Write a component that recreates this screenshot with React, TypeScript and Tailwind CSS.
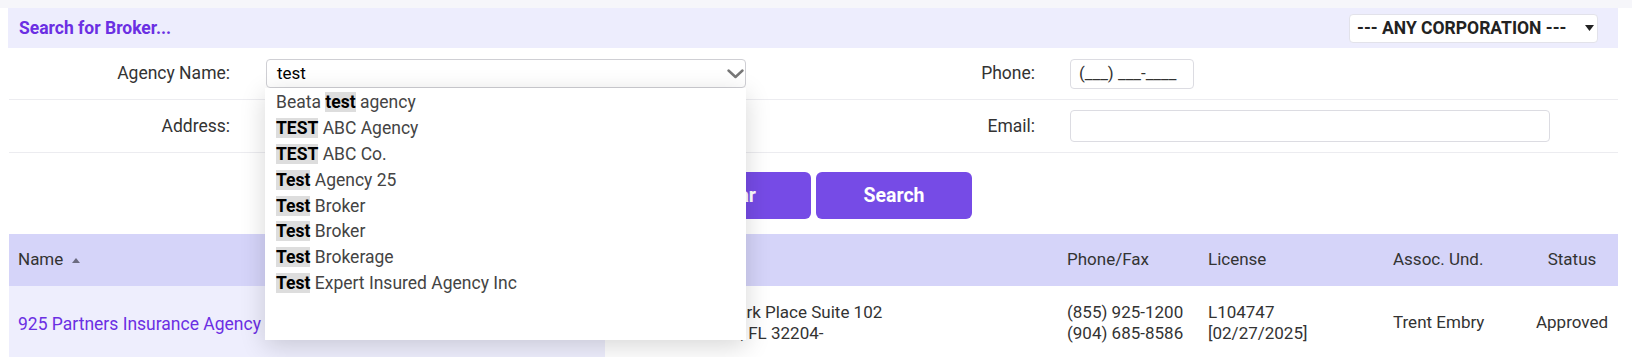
import React from 'react'

const font = { fontFamily: 'Roboto, "Noto Sans", sans-serif' }

const suggestions: { match: string; rest: string; pre?: string }[] = [
  { pre: 'Beata ', match: 'test', rest: ' agency' },
  { match: 'TEST', rest: ' ABC Agency' },
  { match: 'TEST', rest: ' ABC Co.' },
  { match: 'Test', rest: ' Agency 25' },
  { match: 'Test', rest: ' Broker' },
  { match: 'Test', rest: ' Broker' },
  { match: 'Test', rest: ' Brokerage' },
  { match: 'Test', rest: ' Expert Insured Agency Inc' },
]

function Chevron() {
  return (
    <svg width="17" height="10" viewBox="0 0 17 10" className="text-[#777]">
      <path d="M1.5 1.5 L8.5 8 L15.5 1.5" fill="none" stroke="currentColor" strokeWidth="2.4" strokeLinecap="round" strokeLinejoin="round" />
    </svg>
  )
}

export default function App() {
  return (
    <div className="min-h-[357px] bg-white text-[17px] text-[#333]" style={font}>
      <div className="h-[8px] bg-[#f6f6fa]" />
      <div className="pl-[8px] pr-[14px]">
        {/* title bar */}
        <div className="flex h-[40px] items-center justify-between bg-[#ededfd] pl-[11px] pr-[20px]">
          <span className="text-[17.5px] font-bold text-[#6b2fe3]">Search for Broker...</span>
          <div className="flex h-[29px] w-[249px] items-center justify-between rounded-[4px] border border-[#e2e2ea] bg-white pl-[7px] pr-[3px]">
            <span className="text-[17.5px] font-bold text-[#222]">--- ANY CORPORATION ---</span>
            <svg width="9" height="6" viewBox="0 0 9 6">
              <path d="M0 0 H9 L4.5 6 Z" fill="#222" />
            </svg>
          </div>
        </div>

        {/* form */}
        <div className="relative pl-[1px]">
          <div className="flex h-[52px] items-center border-b border-[#ececf0]">
            <div className="w-[221px] text-right text-[17.5px]">Agency Name:</div>
            <div className="ml-[36px] flex h-[29px] w-[480px] items-center justify-between rounded-[4px] border border-[#cfcfd4] pl-[10px] pr-[1px] text-black">
              <span>test</span>
              <Chevron />
            </div>
            <div className="w-[289px] text-right text-[17.5px]">Phone:</div>
            <div className="ml-[35px] flex h-[30px] w-[124px] items-center rounded-[4px] border border-[#dcdce2] pl-[8px] text-[#333]">
              (___) ___-____
            </div>
          </div>
          <div className="flex h-[53px] items-center border-b border-[#ececf0]">
            <div className="w-[221px] text-right text-[17.5px]">Address:</div>
            <div className="ml-[36px] h-[31px] w-[480px] rounded-[4px] border border-[#dcdce2]" />
            <div className="w-[289px] text-right text-[17.5px]">Email:</div>
            <div className="ml-[35px] h-[32px] w-[480px] rounded-[4px] border border-[#dcdce2]" />
          </div>
          <div className="flex justify-center gap-[5px] pb-[15px] pt-[19px]">
            <button className="h-[47px] w-[156px] rounded-[6px] bg-[#764be6] text-[19.5px] font-bold text-white">Clear</button>
            <button className="h-[47px] w-[156px] rounded-[6px] bg-[#764be6] text-[19.5px] font-bold text-white">Search</button>
          </div>

          {/* autocomplete list */}
          <div className="absolute left-[257px] top-[40px] z-10 h-[252px] w-[481px] bg-white pl-[11px] pt-[1px] text-[17.5px] shadow-[0_6px_24px_rgba(0,0,0,0.16)]">
            {suggestions.map((s, i) => (
              <div key={i} className="h-[25.9px] leading-[27px] text-[#444]">
                {s.pre}
                <span className="bg-[#dddddd] font-bold text-black">{s.match}</span>
                {s.rest}
              </div>
            ))}
          </div>
        </div>

        {/* results table */}
        <div className="pl-[1px]">
          <div className="grid h-[52px] grid-cols-[596px_454px_141px_185px_141px_1fr] items-center bg-[#d5d4f9]">
            <div className="flex items-center gap-[9px] pl-[9px]">
              Name
              <svg width="8" height="5" viewBox="0 0 8 5">
                <path d="M0 5 L4 0 L8 5 Z" fill="#6b6b80" />
              </svg>
            </div>
            <div className="pl-[42px]">Address</div>
            <div className="pl-[8px]">Phone/Fax</div>
            <div className="pl-[8px]">License</div>
            <div className="pl-[8px]">Assoc. Und.</div>
            <div className="text-center">Status</div>
          </div>
          <div className="grid h-[74px] grid-cols-[596px_454px_141px_185px_141px_1fr] items-center">
            <div className="flex h-full items-center bg-[#eeeefd] pl-[9px] pt-[2px] text-[17.5px] text-[#6b2fe3]">925 Partners Insurance Agency</div>
            <div className="pl-[42px] leading-[21px]">
              <div>1301 Westpark Place Suite 102</div>
              <div>Jacksonville, FL 32204-</div>
            </div>
            <div className="pl-[8px] leading-[21px]">
              <div>(855) 925-1200</div>
              <div>(904) 685-8586</div>
            </div>
            <div className="pl-[8px] leading-[21px]">
              <div>L104747</div>
              <div>[02/27/2025]</div>
            </div>
            <div className="pl-[8px]">Trent Embry</div>
            <div className="text-center">Approved</div>
          </div>
        </div>
      </div>
    </div>
  )
}
